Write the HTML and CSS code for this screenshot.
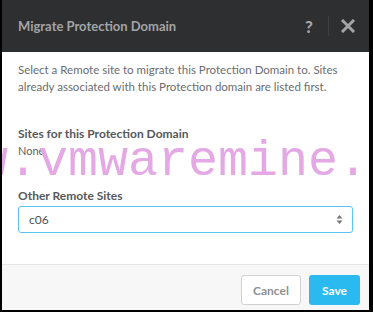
FILE: index.html
```html
<!DOCTYPE html>
<html lang="en">
<head>
    <meta charset="UTF-8">
    <title>Migrate Protection Domain</title>
    <link rel="stylesheet" href="styles.css">
</head>
<body>
    <div class="modal">
        <!-- Header -->
        <div class="modal-header">
            <h2>Migrate Protection Domain</h2>
            <div class="header-actions">
                <span class="help">?</span>
                <span class="divider"></span>
                <span class="close">
                    <svg width="14" height="14" viewBox="0 0 14 14">
                        <path d="M2 2 L12 12 M12 2 L2 12" stroke="#a3a4a6" stroke-width="3" stroke-linecap="square"/>
                    </svg>
                </span>
            </div>
        </div>

        <!-- Body -->
        <div class="modal-body">
            <p class="intro">Select a Remote site to migrate this Protection Domain to. Sites already associated with this Protection domain are listed first.</p>

            <div class="field">
                <h4>Sites for this Protection Domain</h4>
                <p class="none">None.</p>
            </div>

            <div class="field">
                <h4>Other Remote Sites</h4>
                <div class="select">
                    <span>c06</span>
                    <svg width="7" height="11" viewBox="0 0 7 11">
                        <path d="M3.5 1 L6.5 4.5 L0.5 4.5 Z M3.5 10 L6.5 6.5 L0.5 6.5 Z" fill="#777"/>
                    </svg>
                </div>
            </div>

            <div class="watermark">www.vmwaremine.com</div>
        </div>

        <!-- Footer -->
        <div class="modal-footer">
            <button class="btn-cancel">Cancel</button>
            <button class="btn-save">Save</button>
        </div>
    </div>
</body>
</html>
```

FILE: styles.css
```css
body {
    margin: 0;
    padding: 0;
    background-color: #000;
    font-family: 'Lato', sans-serif;
    overflow: hidden;
}

.modal {
    margin: 0 4px 2px 2px;
    height: 310px;
    display: flex;
    flex-direction: column;
    background-color: #fff;
    overflow: hidden;
}

.modal-header {
    height: 52px;
    flex-shrink: 0;
    background-color: #2e2f31;
    display: flex;
    align-items: center;
    justify-content: space-between;
    padding: 0 14px 0 16px;
}

.modal-header h2 {
    margin: 0;
    font-size: 13px;
    font-weight: 700;
    color: #a3a4a6;
}

.header-actions {
    display: flex;
    align-items: center;
}

.help {
    font-size: 17px;
    font-weight: 900;
    color: #a3a4a6;
    width: 14px;
    text-align: center;
}

.divider {
    width: 1px;
    height: 20px;
    background-color: #3e3f42;
    margin: 0 12px 0 12px;
}

.close {
    display: flex;
}

.modal-body {
    position: relative;
    flex-grow: 1;
    padding: 9px 16px 0 16px;
    color: #5f6163;
}

.intro {
    margin: 0 0 31px 0;
    font-size: 11.5px;
    line-height: 17px;
    color: #6b6d70;
}

.field {
    margin-bottom: 31px;
}

.field h4 {
    margin: 0 0 3px 0;
    font-size: 12px;
    font-weight: 700;
    color: #56585b;
}

.none {
    margin: 0;
    font-size: 11px;
    color: #5f6163;
}

.select {
    height: 25px;
    border: 1px solid #59c6ef;
    border-radius: 3px;
    display: flex;
    align-items: center;
    justify-content: space-between;
    padding: 0 9px 0 10px;
    font-size: 12px;
    color: #4e5053;
}

.watermark {
    position: absolute;
    left: -84px;
    top: 81px;
    font-family: 'Liberation Mono', monospace;
    font-size: 50px;
    color: #e4a8e4;
    white-space: nowrap;
    pointer-events: none;
}

.modal-footer {
    height: 51px;
    flex-shrink: 0;
    background-color: #f7f7f7;
    border-top: 1px solid #e6e6e6;
    display: flex;
    align-items: center;
    justify-content: flex-end;
    padding: 0 9px 0 0;
    box-sizing: border-box;
}

button {
    font-family: 'Lato', sans-serif;
    font-size: 12px;
    font-weight: 700;
    height: 30px;
    border-radius: 3px;
    cursor: pointer;
}

.btn-cancel {
    width: 60px;
    background-color: #fff;
    border: 1px solid #cfd1d3;
    color: #8e9093;
    margin-right: 8px;
}

.btn-save {
    width: 51px;
    background-color: #2abaf0;
    border: none;
    color: #fff;
}
```
